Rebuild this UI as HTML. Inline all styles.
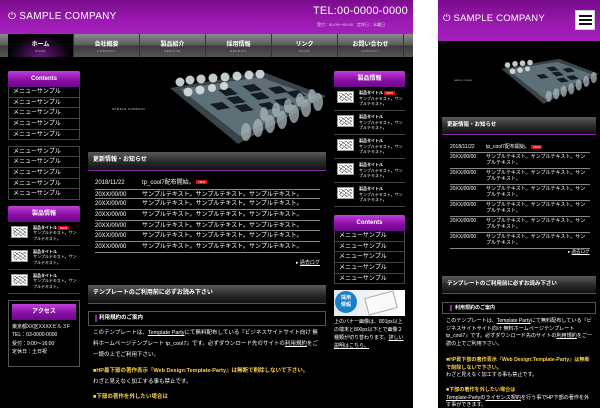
<!DOCTYPE html>
<html><head><meta charset="utf-8"><style>
*{margin:0;padding:0;box-sizing:border-box}
body{width:600px;height:408px;background:#fff;position:relative;overflow:hidden;font-family:"Liberation Sans","Noto Sans CJK JP",sans-serif;color:#fff}
.a{position:absolute}
.d{left:0;top:0;width:413px;height:408px;background:#000;overflow:hidden}
.m{left:438px;top:0;width:162px;height:408px;background:#000;overflow:hidden}
.hdr{background:linear-gradient(#7a0c8c,#9a1ab0 60%,#a520bd);}
.nav{left:0;top:34px;width:413px;height:23px;background:linear-gradient(#8a8a8a,#5a5a5a 50%,#3a3a3a 51%,#555);}
.ni{position:absolute;top:0;width:66px;height:23px;border-right:1px solid #333;text-align:center}
.ni b{display:block;font-size:6px;margin-top:5px;font-weight:bold}
.ni i{display:block;font-size:3px;font-style:normal;color:#bbb;margin-top:1px;letter-spacing:.5px}
.ph{background:linear-gradient(#c040d8,#8a10a8 55%,#6a0888);border-radius:2px 2px 0 0;text-align:center;font-size:6px;font-weight:bold;line-height:16px}
.mi{border:1px solid #444;border-top:none;font-size:6px;height:10.7px;line-height:10px;padding-left:4px}
.gh{background:linear-gradient(#5a5a5a,#2a2a2a 55%,#111);border-bottom:1.5px solid #8a2aa0;font-size:6px;font-weight:bold;padding-left:5px}
.nr{font-size:6px;border-bottom:1px solid #888;height:10.7px;line-height:10px}
.nr span{display:inline-block;width:47px}
.new{display:inline-block;background:#d01010;font-size:3px;padding:0 2px;line-height:4px;vertical-align:middle;color:#fff}
.pr{border-bottom:1px solid #444;height:24px}
.thumb{position:absolute;left:3px;top:4px;width:17px;height:12px;background:#fff;border:1px solid #999}
.thumb:after{content:"";position:absolute;inset:1px;background:repeating-linear-gradient(35deg,transparent 0 2px,#555 2px 2.6px),repeating-linear-gradient(-40deg,transparent 0 3px,#777 3px 3.5px)}
.pt{position:absolute;left:25px;top:3px;font-size:4px;line-height:5.5px;width:46px}
.tx{font-size:5.5px;line-height:11px}
.y{color:#ffd24a;font-weight:bold}
u{text-decoration:underline}
</style></head><body>

<div class="a d">
 <div class="a hdr" style="left:0;top:0;width:413px;height:34px"></div>
 <div class="a" style="left:8px;top:11px;font-size:10px;letter-spacing:.3px">⏻ SAMPLE COMPANY</div>
 <div class="a" style="left:313px;top:5px;font-size:11px;letter-spacing:.2px">TEL:00-0000-0000</div>
 <div class="a" style="left:317px;top:22px;font-size:4px;color:#ddd">受付：00:00〜00:00　定休日：水曜日</div>
 <div class="a nav">
  <div class="ni" style="left:8px;background:radial-gradient(ellipse at 50% 100%,#6a1a80,#000 70%)"><b>ホーム</b><i>HOME</i></div>
  <div class="ni" style="left:74px"><b>会社概要</b><i>COMPANY</i></div>
  <div class="ni" style="left:140px"><b>製品紹介</b><i>SERVICE</i></div>
  <div class="ni" style="left:206px"><b>採用情報</b><i>RECRUIT</i></div>
  <div class="ni" style="left:272px"><b>リンク</b><i>STAFF</i></div>
  <div class="ni" style="left:338px"><b>お問い合わせ</b><i>CONTACT</i></div>
 </div>

 <div class="a" style="left:8px;top:71px;width:72px">
  <div class="ph">Contents</div>
  <div class="mi">メニューサンプル</div><div class="mi">メニューサンプル</div><div class="mi">メニューサンプル</div><div class="mi">メニューサンプル</div><div class="mi">メニューサンプル</div>
  <div style="height:6px"></div>
  <div class="mi" style="border-top:1px solid #444">メニューサンプル</div><div class="mi">メニューサンプル</div><div class="mi">メニューサンプル</div><div class="mi">メニューサンプル</div><div class="mi">メニューサンプル</div>
  <div style="height:6px"></div>
  <div class="ph">製品情報</div>
  <div class="pr" style="position:relative"><div class="thumb"></div><div class="pt"><b>製品タイトル</b> <span class="new">NEW</span><br>サンプルテキスト。サンプルテキスト。</div></div>
  <div class="pr" style="position:relative"><div class="thumb"></div><div class="pt"><b>製品タイトル</b><br>サンプルテキスト。サンプルテキスト。</div></div>
  <div class="pr" style="position:relative"><div class="thumb"></div><div class="pt"><b>製品タイトル</b><br>サンプルテキスト。サンプルテキスト。</div></div>
  <div style="margin-top:6px;border:1px solid #555;height:67px;padding:3px">
   <div class="ph" style="border-radius:0">アクセス</div>
   <div style="font-size:5px;line-height:8.5px;margin-top:3px">東京都XX区XXXXビル３F<br>TEL：03-0000-0000<br>受付：9:00〜16:00<br>定休日：土日祝</div>
  </div>
 </div>

 <div class="a" style="left:112px;top:107px;font-size:3px;color:#ccc;letter-spacing:.4px">SAMPLE COMPANY</div>
 <svg class="a" style="left:168px;top:70px" width="160" height="75" viewBox="0 0 160 75">
  <polygon points="2,18 95,2 158,26 70,74" fill="#3a4448"/>
  <polygon points="12,19 92,7 148,27 72,66" fill="#5d7078"/>
  <g fill="#0d1418" opacity=".9">
   <polygon points="50,20 62,18 70,24 58,26"/><polygon points="74,16 86,14 94,20 82,22"/><polygon points="58,28 70,26 78,32 66,34"/><polygon points="82,24 94,22 102,28 90,30"/><polygon points="100,18 112,16 120,22 108,24"/><polygon points="66,36 78,34 86,40 74,42"/><polygon points="106,30 118,28 126,34 114,36"/><polygon points="90,34 102,32 110,38 98,40"/><polygon points="42,34 54,32 62,38 50,40"/><polygon points="118,22 130,20 138,26 126,28"/>
  </g>
  <g fill="#d8e0e2" opacity=".9"><circle cx="12" cy="12" r="4.5"/><circle cx="22" cy="10" r="4.5"/><circle cx="33" cy="9" r="4.5"/><circle cx="45" cy="8" r="4.5"/><circle cx="57" cy="7" r="4.5"/><circle cx="69" cy="6" r="4.5"/><circle cx="81" cy="5" r="4.5"/><circle cx="92" cy="4" r="4.5"/><circle cx="20" cy="22" r="4.5"/><circle cx="32" cy="20" r="4.5"/><circle cx="44" cy="18" r="4"/><circle cx="56" cy="16" r="4"/></g>
  <g fill="#aab6b9" opacity=".75"><ellipse cx="78" cy="62" rx="5" ry="9"/><ellipse cx="90" cy="58" rx="5" ry="9"/><ellipse cx="102" cy="54" rx="5" ry="9"/><ellipse cx="114" cy="50" rx="5" ry="9"/><ellipse cx="126" cy="44" rx="5" ry="9"/><ellipse cx="138" cy="38" rx="5" ry="9"/><ellipse cx="150" cy="32" rx="5" ry="9"/><ellipse cx="96" cy="44" rx="4" ry="7"/><ellipse cx="108" cy="40" rx="4" ry="7"/><ellipse cx="120" cy="36" rx="4" ry="7"/><ellipse cx="132" cy="30" rx="4" ry="7"/><ellipse cx="144" cy="26" rx="4" ry="7"/></g>
 </svg>

 <div class="a gh" style="left:88px;top:152px;width:238px;height:19px;line-height:17px">更新情報・お知らせ</div>
 <div class="a" style="left:95px;top:178px;width:225px">
  <div class="nr" style="border-bottom:none"><span>2018/11/22</span>tp_cool7配布開始。 <span class="new" style="width:auto">NEW</span></div>
  <div class="nr" style="border-top:1px solid #888"><span>20XX/00/00</span>サンプルテキスト。サンプルテキスト。サンプルテキスト。</div>
  <div class="nr"><span>20XX/00/00</span>サンプルテキスト。サンプルテキスト。サンプルテキスト。</div>
  <div class="nr"><span>20XX/00/00</span>サンプルテキスト。サンプルテキスト。サンプルテキスト。</div>
  <div class="nr"><span>20XX/00/00</span>サンプルテキスト。サンプルテキスト。サンプルテキスト。</div>
  <div class="nr"><span>20XX/00/00</span>サンプルテキスト。サンプルテキスト。サンプルテキスト。</div>
  <div class="nr"><span>20XX/00/00</span>サンプルテキスト。サンプルテキスト。サンプルテキスト。</div>
 </div>
 <div class="a" style="left:296px;top:259px;font-size:5px">▸ <u>過去ログ</u></div>

 <div class="a gh" style="left:88px;top:285px;width:238px;height:19px;line-height:17px">テンプレートのご利用前に必ずお読み下さい</div>
 <div class="a" style="left:88px;top:311px;width:238px;height:15px;border:1px solid #555;font-size:5.5px;line-height:13px;padding-left:10px;font-weight:bold"><span style="position:absolute;left:6px;top:3px;width:1.5px;height:7px;background:#8a2aa0"></span>利用規約のご案内</div>
 <div class="a tx" style="left:93px;top:328px;width:230px">このテンプレートは、<u>Template Party</u>にて無料配布している『ビジネスサイトサイト向け 無料ホームページテンプレート tp_cool7』です。必ずダウンロード先のサイトの<u>利用規約</u>をご一読の上でご利用下さい。</div>
 <div class="a tx" style="left:93px;top:366px;width:230px"><span class="y">■HP最下部の著作表示『Web Design:Template-Party』は無断で削除しないで下さい。</span><br>わざと見えなく加工する事も禁止です。</div>
 <div class="a tx y" style="left:93px;top:392px">■下部の著作を外したい場合は</div>

 <div class="a" style="left:334px;top:71px;width:71px">
  <div class="ph">製品情報</div>
  <div class="pr" style="position:relative"><div class="thumb"></div><div class="pt"><b>製品タイトル</b> <span class="new">NEW</span><br>サンプルテキスト。サンプルテキスト。</div></div>
  <div class="pr" style="position:relative"><div class="thumb"></div><div class="pt"><b>製品タイトル</b><br>サンプルテキスト。サンプルテキスト。</div></div>
  <div class="pr" style="position:relative"><div class="thumb"></div><div class="pt"><b>製品タイトル</b><br>サンプルテキスト。サンプルテキスト。</div></div>
  <div class="pr" style="position:relative"><div class="thumb"></div><div class="pt"><b>製品タイトル</b><br>サンプルテキスト。サンプルテキスト。</div></div>
  <div class="pr" style="position:relative"><div class="thumb"></div><div class="pt"><b>製品タイトル</b><br>サンプルテキスト。サンプルテキスト。</div></div>
  <div style="height:8px"></div>
  <div class="ph">Contents</div>
  <div class="mi">メニューサンプル</div><div class="mi">メニューサンプル</div><div class="mi">メニューサンプル</div><div class="mi">メニューサンプル</div><div class="mi">メニューサンプル</div>
 </div>
 <div class="a" style="left:334px;top:290px;width:71px;height:26px;background:linear-gradient(90deg,#e0e8ee,#fff)">
  <div class="a" style="left:1px;top:1px;width:22px;height:22px;border-radius:50%;background:#1a7fc8;font-size:5px;text-align:center;line-height:7px;padding-top:4px;font-weight:bold">採用<br>情報</div>
  <div class="a" style="left:32px;top:4px;width:30px;height:18px;background:#fafafa;border:1px solid #aaa;transform:rotate(-15deg)"></div>
 </div>
 <div class="a" style="left:334px;top:318px;width:72px;font-size:5px;line-height:8px">上のバナー画像は、801px以上の端末と800px以下とで画像２種類が切り替わります。<u>詳しい説明はこちら。</u></div>
</div>

<div class="a m">
 <div class="a hdr" style="left:0;top:0;width:162px;height:41px"></div>
 <div class="a" style="left:5px;top:13px;font-size:9.5px;letter-spacing:.2px">⏻ SAMPLE COMPANY</div>
 <div class="a" style="left:137px;top:10px;width:20px;height:20px;background:#fff;border:1px solid #ccc">
  <div class="a" style="left:3px;top:4px;width:13px;height:2px;background:#111"></div>
  <div class="a" style="left:3px;top:8px;width:13px;height:2px;background:#111"></div>
  <div class="a" style="left:3px;top:12px;width:13px;height:2px;background:#111"></div>
 </div>
 <div class="a" style="left:16px;top:80px;font-size:2px;color:#bbb">SAMPLE COMPANY</div>
 <svg class="a" style="left:62px;top:56px" width="100" height="50" viewBox="0 0 160 75">
  <polygon points="2,18 95,2 158,26 70,74" fill="#3a4448"/>
  <polygon points="12,19 92,7 148,27 72,66" fill="#5d7078"/>
  <g fill="#0d1418" opacity=".9"><polygon points="74,16 86,14 94,20 82,22"/><polygon points="82,24 94,22 102,28 90,30"/><polygon points="100,18 112,16 120,22 108,24"/><polygon points="106,30 118,28 126,34 114,36"/><polygon points="58,28 70,26 78,32 66,34"/><polygon points="90,34 102,32 110,38 98,40"/></g>
  <g fill="#d8e0e2" opacity=".9"><circle cx="12" cy="12" r="4.5"/><circle cx="24" cy="10" r="4.5"/><circle cx="36" cy="9" r="4.5"/><circle cx="48" cy="8" r="4.5"/><circle cx="20" cy="22" r="4.5"/><circle cx="32" cy="20" r="4.5"/><circle cx="44" cy="18" r="4"/></g>
  <g fill="#aab6b9" opacity=".75"><ellipse cx="78" cy="62" rx="5" ry="9"/><ellipse cx="90" cy="58" rx="5" ry="9"/><ellipse cx="102" cy="54" rx="5" ry="9"/><ellipse cx="114" cy="50" rx="5" ry="9"/><ellipse cx="126" cy="44" rx="5" ry="9"/><ellipse cx="138" cy="38" rx="5" ry="9"/><ellipse cx="150" cy="32" rx="5" ry="9"/></g>
 </svg>
 <div class="a gh" style="left:4px;top:117px;width:154px;height:18px;line-height:16px;font-size:5.5px">更新情報・お知らせ</div>
 <div class="a" style="left:12px;top:143px;width:140px;font-size:5px;line-height:6.5px">
  <div style="padding:1px 0"><span style="display:inline-block;width:36px">2018/11/22</span>tp_cool7配布開始。 <span class="new">NEW</span></div>
  <div style="border-top:1px solid #888;padding:1px 0 1px 36px;text-indent:-36px"><span style="display:inline-block;width:36px;text-indent:0">20XX/00/00</span>サンプルテキスト。サンプルテキスト。サンプルテキスト。</div>
  <div style="border-top:1px solid #888;padding:1px 0 1px 36px;text-indent:-36px"><span style="display:inline-block;width:36px;text-indent:0">20XX/00/00</span>サンプルテキスト。サンプルテキスト。サンプルテキスト。</div>
  <div style="border-top:1px solid #888;padding:1px 0 1px 36px;text-indent:-36px"><span style="display:inline-block;width:36px;text-indent:0">20XX/00/00</span>サンプルテキスト。サンプルテキスト。サンプルテキスト。</div>
  <div style="border-top:1px solid #888;padding:1px 0 1px 36px;text-indent:-36px"><span style="display:inline-block;width:36px;text-indent:0">20XX/00/00</span>サンプルテキスト。サンプルテキスト。サンプルテキスト。</div>
  <div style="border-top:1px solid #888;padding:1px 0 1px 36px;text-indent:-36px"><span style="display:inline-block;width:36px;text-indent:0">20XX/00/00</span>サンプルテキスト。サンプルテキスト。サンプルテキスト。</div>
  <div style="border-top:1px solid #888;border-bottom:1px solid #888;padding:1px 0 1px 36px;text-indent:-36px"><span style="display:inline-block;width:36px;text-indent:0">20XX/00/00</span>サンプルテキスト。サンプルテキスト。サンプルテキスト。</div>
 </div>
 <div class="a" style="left:130px;top:249px;font-size:4.5px">▸ <u>過去ログ</u></div>
 <div class="a gh" style="left:4px;top:276px;width:154px;height:18px;line-height:16px;font-size:5.5px">テンプレートのご利用前に必ずお読み下さい</div>
 <div class="a" style="left:4px;top:302px;width:154px;height:12px;border:1px solid #555;font-size:5px;line-height:10px;padding-left:12px;font-weight:bold"><span style="position:absolute;left:7px;top:2px;width:1.5px;height:6px;background:#8a2aa0"></span>利用規約のご案内</div>
 <div class="a" style="left:8px;top:318px;width:148px;font-size:5.1px;line-height:7.7px">このテンプレートは、<u>Template Party</u>にて無料配布している『ビジネスサイトサイト向け 無料ホームページテンプレート tp_cool7』です。必ずダウンロード先のサイトの<u>利用規約</u>をご一読の上でご利用下さい。</div>
 <div class="a" style="left:8px;top:357px;width:148px;font-size:5.1px;line-height:7.7px"><span class="y">■HP最下部の著作表示『Web Design:Template-Party』は無断で削除しないで下さい。</span><br>わざと見えなく加工する事も禁止です。</div>
 <div class="a" style="left:8px;top:387px;width:148px;font-size:5.1px;line-height:7.7px"><span class="y">■下部の著作を外したい場合は</span><br><u>Template-Party</u>の<u>ライセンス契約</u>を行う事でHP下部の著作を外す事ができます。</div>
</div>
</body></html>
